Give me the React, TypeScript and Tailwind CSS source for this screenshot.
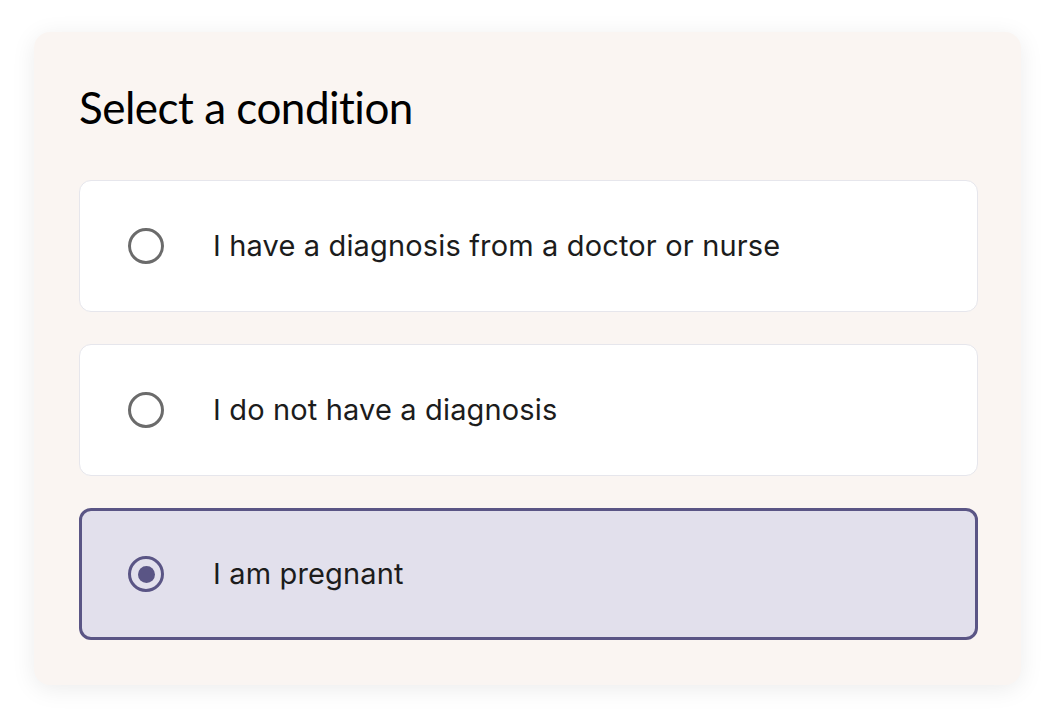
import { useState } from 'react';

const options = [
  'I have a diagnosis from a doctor or nurse',
  'I do not have a diagnosis',
  'I am pregnant',
];

function Radio({ checked }: { checked: boolean }) {
  return (
    <span
      className={`flex h-[36px] w-[36px] shrink-0 items-center justify-center rounded-full border-[3px] ${
        checked ? 'border-[#5a5585]' : 'border-[#6b6b6b]'
      }`}
    >
      {checked && <span className="h-[17px] w-[17px] rounded-full bg-[#5a5585]" />}
    </span>
  );
}

export default function App() {
  const [selected, setSelected] = useState(2);

  return (
    <div className="min-h-screen bg-white pl-[34px] pt-[32px]">
      <div className="w-[987px] rounded-[16px] bg-[#faf5f2] pb-[45px] pl-[45px] pr-[43px] pt-[45px] shadow-[0_4px_24px_rgba(0,0,0,0.08)]">
        <h1 className="mb-[43px] text-[44px] leading-[60px] tracking-[-0.5px] text-black [font-family:Lato,'Noto_Sans',sans-serif]">
          Select a condition
        </h1>
        <div className="flex flex-col gap-[32px]">
          {options.map((label, i) => {
            const checked = selected === i;
            return (
              <button
                key={label}
                onClick={() => setSelected(i)}
                className={`box-border flex h-[132px] items-center rounded-[12px] text-left ${
                  checked
                    ? 'border-[3px] border-[#5a5585] bg-[#e2e0ec] pl-[46px]'
                    : 'border border-[#e6e6ec] bg-white pl-[48px]'
                }`}
              >
                <Radio checked={checked} />
                <span className="ml-[49px] text-[29px] tracking-[0.15px] text-[#1c1c1c] [font-family:Inter,sans-serif]">
                  {label}
                </span>
              </button>
            );
          })}
        </div>
      </div>
    </div>
  );
}
